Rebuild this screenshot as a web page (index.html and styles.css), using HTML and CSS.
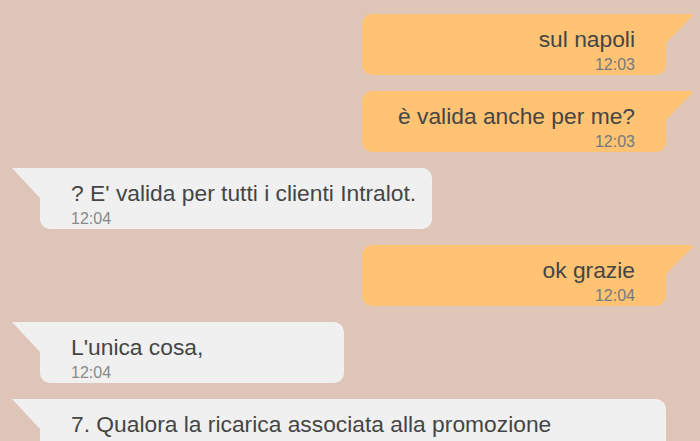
FILE: index.html
```html
<!DOCTYPE html>
<html lang="it">
<head>
<meta charset="utf-8">
<title>Chat</title>
<link rel="stylesheet" href="styles.css">
</head>
<body>
<div class="chat">
  <div class="msg out">
    <div class="text">sul napoli</div>
    <div class="time">12:03</div>
  </div>
  <div class="msg out">
    <div class="text">è valida anche per me?</div>
    <div class="time">12:03</div>
  </div>
  <div class="msg in">
    <div class="text">? E' valida per tutti i clienti Intralot.</div>
    <div class="time">12:04</div>
  </div>
  <div class="msg out">
    <div class="text">ok grazie</div>
    <div class="time">12:04</div>
  </div>
  <div class="msg in">
    <div class="text">L'unica cosa,</div>
    <div class="time">12:04</div>
  </div>
  <div class="msg in">
    <div class="text">7. Qualora la ricarica associata alla promozione successivamente venga annullata, il bonus sarà revocato.</div>
    <div class="time">12:04</div>
  </div>
</div>
</body>
</html>
```

FILE: styles.css
```css
html, body {
  margin: 0;
  padding: 0;
  height: 100%;
  overflow: hidden;
  background: #dec5b7;
  font-family: "Liberation Sans", Arial, Helvetica, sans-serif;
}

.chat {
  display: flex;
  flex-direction: column;
  align-items: flex-start;
  gap: 16px;
  padding: 14px 34px 0 40px;
}

.msg {
  position: relative;
  box-sizing: border-box;
  min-width: 304px;
  max-width: 626px;
  padding: 12px 16px 1px;
  color: #454545;
}

.text {
  font-size: 22.8px;
  line-height: 26px;
}

.time {
  font-size: 16px;
  line-height: 18px;
  margin-top: 4px;
}

.msg::after {
  content: "";
  position: absolute;
  top: 0;
  width: 28px;
  height: 30px;
}

.out {
  align-self: flex-end;
  background: #ffc373;
  border-radius: 10px 0 10px 10px;
  padding-right: 31px;
  text-align: right;
}

.out .time {
  color: #747882;
}

.out::after {
  right: -27px;
  background: #ffc373;
  clip-path: polygon(0 0, 92% 0, 100% 4%, 0 100%);
}

.in {
  background: #f0f0f0;
  border-radius: 0 10px 10px 10px;
  padding-left: 31px;
}

.in .time {
  color: #888888;
}

.in::after {
  left: -28px;
  background: #f0f0f0;
  clip-path: polygon(0 0, 100% 0, 100% 100%);
}
```
